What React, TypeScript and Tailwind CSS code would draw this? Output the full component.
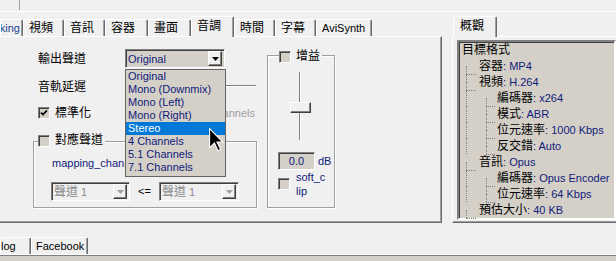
import type { ReactNode } from "react";

const channels = [
  "Original",
  "Mono (Downmix)",
  "Mono (Left)",
  "Mono (Right)",
  "Stereo",
  "4 Channels",
  "5.1 Channels",
  "7.1 Channels",
];

const tabs = [
  { label: "視頻", width: "w-[41px]" },
  { label: "音訊", width: "w-[41px]" },
  { label: "容器", width: "w-[43px]" },
  { label: "畫面", width: "w-[43px]" },
  { label: "音調", width: "w-[43px]", selected: true },
  { label: "時間", width: "w-[41px]" },
  { label: "字幕", width: "w-[41px]" },
  { label: "AviSynth", width: "w-[56px]" },
];

type TreeItem = { level: 0 | 1 | 2; label: string; value?: string; last?: boolean };

const summary: TreeItem[] = [
  { level: 0, label: "目標格式" },
  { level: 1, label: "容器", value: "MP4" },
  { level: 1, label: "視頻", value: "H.264" },
  { level: 2, label: "編碼器", value: "x264" },
  { level: 2, label: "模式", value: "ABR" },
  { level: 2, label: "位元速率", value: "1000 Kbps" },
  { level: 2, label: "反交錯", value: "Auto", last: true },
  { level: 1, label: "音訊", value: "Opus" },
  { level: 2, label: "編碼器", value: "Opus Encoder" },
  { level: 2, label: "位元速率", value: "64 Kbps", last: true },
  { level: 1, label: "預估大小", value: "40 KB", last: true },
];

function Tab({
  children,
  className = "",
  selected = false,
}: {
  children: ReactNode;
  className?: string;
  selected?: boolean;
}) {
  return (
    <div
      className={`flex shrink-0 overflow-hidden whitespace-nowrap rounded-t-[2px] border-l border-r border-t border-l-white border-r-[#696969] border-t-white bg-[#f0f0f0] leading-[14px] shadow-[inset_-1px_0_0_#a0a0a0] ${
        selected ? "relative z-10 -mb-px h-[21px] items-start pt-[2px]" : "h-[17px] items-center"
      } ${className}`}
    >
      {children}
    </div>
  );
}

function CheckBox({ checked = false }: { checked?: boolean }) {
  return (
    <span className="flex h-[12px] w-[12px] shrink-0 items-center justify-center border border-b-white border-l-[#808080] border-r-white border-t-[#808080] bg-[#d4d0c8] shadow-[inset_1px_1px_0_#404040]">
      {checked && (
        <svg width="8" height="8" viewBox="0 0 8 8">
          <polyline points="1,3.6 3,5.6 7,1.4" fill="none" stroke="#000" strokeWidth="1.7" />
        </svg>
      )}
    </span>
  );
}

function ComboBox({
  children,
  disabled = false,
  className = "",
}: {
  children: ReactNode;
  disabled?: boolean;
  className?: string;
}) {
  return (
    <div
      className={`flex h-[19px] shrink-0 items-center border border-b-white border-l-[#808080] border-r-white border-t-[#808080] shadow-[inset_1px_1px_0_#404040] ${
        disabled ? "bg-[#f0f0f0] text-[#8a8a8a]" : "bg-[#d4d0c8] text-[#10207a]"
      } ${className}`}
    >
      <span className="flex-1 whitespace-nowrap pl-[2px] leading-[14px]">{children}</span>
      <span className="mr-[2px] flex h-[15px] w-[14px] items-center justify-center border border-b-[#404040] border-l-white border-r-[#404040] border-t-white bg-[#f0f0f0] shadow-[inset_-1px_-1px_0_#808080]">
        <svg width="7" height="4" viewBox="0 0 7 4">
          <path d="M0 0h7L3.5 4z" fill={disabled ? "#a0a0a0" : "#000"} />
        </svg>
      </span>
    </div>
  );
}

function Connector({ last = false, stub }: { last?: boolean; stub: string }) {
  return (
    <span className="relative h-[16px] shrink-0">
      <span
        className={`absolute left-[7px] top-0 border-l border-dotted border-[#808080] ${
          last ? "h-[8px]" : "h-[16px]"
        }`}
      />
      <span className={`absolute left-[7px] top-[8px] border-t border-dotted border-[#808080] ${stub}`} />
    </span>
  );
}

function TreeRow({ item }: { item: TreeItem }) {
  return (
    <div className="flex h-[16px] items-center whitespace-nowrap leading-[16px]">
      {item.level === 1 && (
        <span className="w-[20px] shrink-0">
          <Connector last={item.last} stub="w-[10px]" />
        </span>
      )}
      {item.level === 2 && (
        <>
          <span className="relative h-[16px] w-[20px] shrink-0">
            <span className="absolute left-[7px] top-0 h-[16px] border-l border-dotted border-[#808080]" />
          </span>
          <span className="w-[18px] shrink-0">
            <Connector last={item.last} stub="w-[9px]" />
          </span>
        </>
      )}
      <span className={`text-[12px] ${item.level === 0 ? "pl-[3px]" : ""}`}>{item.label}</span>
      {item.value && <span className="text-[#10207a]">: {item.value}</span>}
    </div>
  );
}

export default function App() {
  return (
    <div className="relative h-[261px] w-[616px] overflow-hidden bg-[#f0f0f0] font-['Liberation_Sans','Noto_Sans_CJK_TC',sans-serif] text-[11px] text-black">
      <div className="h-[12px] border-b border-white">
        <div className="ml-[19px] h-[10px] w-px bg-[#a0a0a0]" />
      </div>

      <div className="flex gap-[10px]">
        {/* audio settings */}
        <div className="flex w-[442px] shrink-0 flex-col">
          <div className="flex h-[24px] items-end">
            <Tab className="w-[23px] justify-end pr-[2px] text-[#1a3f8f]">king</Tab>
            {tabs.map((t) => (
              <Tab key={t.label} selected={t.selected} className={`${t.width} pl-[5px]`}>
                <span className={t.label === "AviSynth" ? "" : "text-[12px]"}>{t.label}</span>
              </Tab>
            ))}
          </div>

          <div className="relative flex h-[187px] border-b border-r border-t border-b-[#696969] border-r-[#696969] border-t-white shadow-[inset_-1px_-1px_0_#a0a0a0]">
            <div className="flex w-[257px] shrink-0 flex-col pt-[12px]">
              <div className="flex h-[19px] items-center">
                <span className="w-[125px] shrink-0 pl-[38px] text-[12px] leading-[14px]">輸出聲道</span>
                <ComboBox className="w-[100px]">Original</ComboBox>
              </div>
              <div className="mt-[9px] flex h-[20px] items-center">
                <span className="w-[125px] shrink-0 pl-[38px] text-[12px] leading-[14px]">音軌延遲</span>
                <div className="mr-px mt-[8px] h-[2px] flex-1 self-start border-b border-t border-b-white border-t-[#808080]" />
              </div>
              <div className="mt-[8px] flex h-[16px] items-center pl-[38px] pr-[2px]">
                <CheckBox checked />
                <span className="ml-[5px] text-[12px] leading-[14px]">標準化</span>
                <span className="ml-auto text-[#a0a0a0]">Channels</span>
              </div>

              <div className="ml-[33px] mt-[20px] flex h-[67px] w-[224px] flex-col border border-[#a0a0a0] shadow-[inset_1px_1px_0_#fff,1px_1px_0_#fff]">
                <div className="-mt-[8px] ml-[4px] flex h-[13px] w-fit items-center bg-[#f0f0f0] pr-[2px]">
                  <CheckBox />
                  <span className="ml-[5px] text-[12px] leading-[13px]">對應聲道</span>
                </div>
                <div className="ml-[18px] mt-[9px] h-[14px] w-[73px] overflow-hidden whitespace-nowrap leading-[14px] text-[#10207a]">
                  mapping_channels
                </div>
                <div className="ml-[17px] mt-[12px] flex items-center">
                  <ComboBox disabled className="w-[79px]">
                    <span className="text-[12px]">聲道</span> 1
                  </ComboBox>
                  <span className="ml-[8px] w-[13px]">&lt;=</span>
                  <ComboBox disabled className="ml-[8px] w-[80px]">
                    <span className="text-[12px]">聲道</span> 1
                  </ComboBox>
                </div>
              </div>
            </div>

            {/* gain */}
            <div className="ml-[10px] mt-[18px] flex h-[153px] w-[68px] shrink-0 flex-col border border-[#a0a0a0] shadow-[inset_1px_1px_0_#fff,1px_1px_0_#fff]">
              <div className="-mt-[6px] ml-[11px] flex h-[13px] w-fit items-center bg-[#f0f0f0] pr-[2px]">
                <CheckBox />
                <span className="ml-[5px] text-[12px] leading-[13px]">增益</span>
              </div>
              <div className="relative ml-[22px] mt-[7px] h-[72px] w-[21px]">
                <div className="absolute left-[9px] top-[2px] h-[68px] w-[2px] border-l border-r border-l-[#808080] border-r-white" />
                <div className="absolute left-0 top-[32px] h-[11px] w-[21px] border border-b-[#404040] border-l-white border-r-[#404040] border-t-white bg-[#f0f0f0] shadow-[inset_-1px_-1px_0_#808080]" />
              </div>
              <div className="ml-[10px] mt-[10px] flex items-center">
                <div className="flex h-[18px] w-[37px] items-center justify-center border border-b-white border-l-[#808080] border-r-white border-t-[#808080] bg-[#d4d0c8] text-[#10207a] shadow-[inset_1px_1px_0_#404040]">
                  0.0
                </div>
                <span className="ml-[3px] text-[#10207a]">dB</span>
              </div>
              <div className="ml-[10px] flex h-[28px] items-center">
                <CheckBox />
                <span className="ml-[6px] leading-[14px] text-[#10207a]">
                  soft_c
                  <br />
                  lip
                </span>
              </div>
            </div>

            {/* open drop-down list */}
            <div className="absolute left-[125px] top-[32px] z-20 w-[101px] border border-[#646464] bg-[#d4d0c8] pb-[2px] leading-[13px] text-[#10207a]">
              {channels.map((c) => (
                <div
                  key={c}
                  className={c === "Stereo" ? "h-[13px] bg-[#0078d7] pl-[2px] text-white" : "h-[13px] pl-[2px]"}
                >
                  {c}
                </div>
              ))}
            </div>

            <svg
              className="absolute left-[209px] top-[91px] z-30"
              width="15"
              height="24"
              viewBox="-0.5 -0.5 12.5 20"
            >
              <path d="M0 0V16L4 12L7 18.5L9.2 17.5L6.2 11.2H11Z" fill="#000" stroke="#fff" strokeWidth="0.9" />
            </svg>
          </div>
        </div>

        {/* summary */}
        <div className="flex min-w-0 flex-1 flex-col">
          <div className="flex h-[24px] items-end pl-px">
            <Tab selected className="w-[44px] pl-[6px]">
              <span className="text-[12px]">概觀</span>
            </Tab>
          </div>
          <div className="h-[187px] border-b border-l border-t border-b-[#696969] border-l-white border-t-white pl-[4px] pt-[3px] shadow-[inset_0_-1px_0_#a0a0a0]">
            <div className="h-[180px] border-2 border-b-white border-l-[#808080] border-r-white border-t-[#808080] bg-[#d4d0c8] shadow-[inset_1px_1px_0_#404040]">
              {summary.map((item, i) => (
                <TreeRow key={i} item={item} />
              ))}
            </div>
          </div>
        </div>
      </div>

      <div className="mt-[14px] flex h-[17px]">
        <Tab className="w-[31px] pl-0">log</Tab>
        <Tab className="w-[57px] pl-[4px]">Facebook</Tab>
      </div>
      <div className="h-[7px] border-t border-white">
        <div className="h-full border-t border-[#808080] bg-[#d4d0c8]" />
      </div>
    </div>
  );
}
